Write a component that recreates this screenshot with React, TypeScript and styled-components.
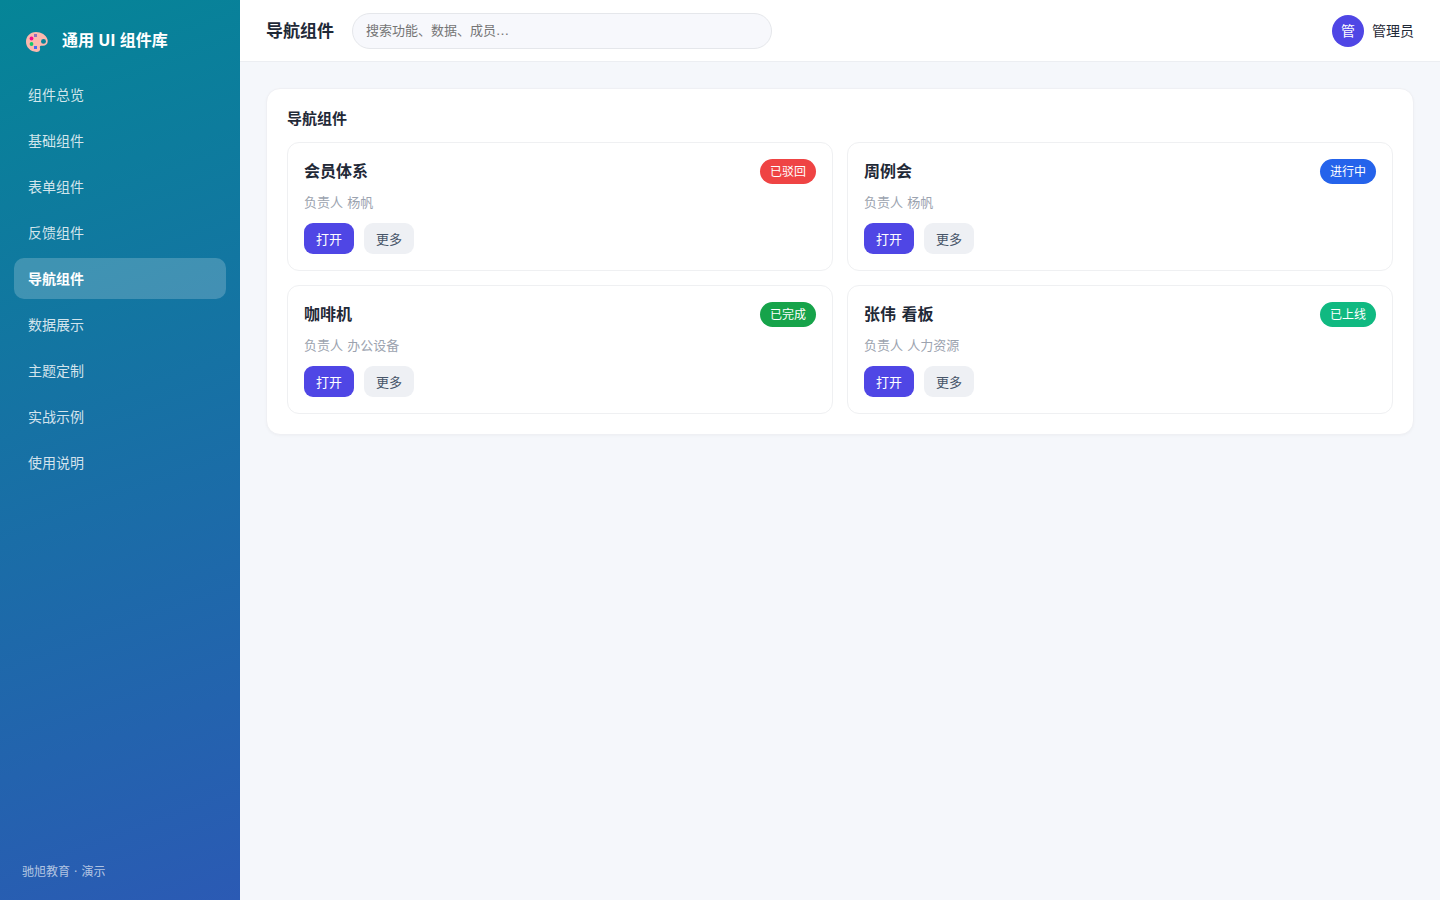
import React from "react";
import styled, { createGlobalStyle } from "styled-components";

const GlobalStyle = createGlobalStyle`
  *, *::before, *::after { box-sizing: border-box; }
  body {
    margin: 0;
    background: #f5f7fb;
    color: #1f2937;
    font-family: "DejaVu Sans", "Noto Sans CJK SC", sans-serif;
    font-size: 14px;
  }
  button, input { font-family: inherit; }
`;

const Shell = styled.div`
  display: flex;
  min-height: 100vh;
`;

const Sidebar = styled.aside`
  flex: 0 0 240px;
  display: flex;
  flex-direction: column;
  padding: 22px 14px 18px;
  background: linear-gradient(160deg, #058597, #2b5ab4);
  color: #fff;
`;

const Brand = styled.div`
  display: flex;
  align-items: center;
  gap: 14px;
  height: 36px;
  margin-bottom: 16px;
  padding-left: 12px;
  font-family: "Open Sans", "Noto Sans CJK SC", sans-serif;
  font-size: 16px;
  font-weight: 700;
  line-height: 24px;

  svg { margin-top: 4px; }
`;

const Nav = styled.nav`
  display: flex;
  flex-direction: column;
  gap: 5px;
`;

const NavLink = styled.a<{ $active?: boolean }>`
  padding: 1px 14px 0;
  border-radius: 10px;
  background: ${(p) => (p.$active ? "rgba(255, 255, 255, 0.2)" : "transparent")};
  color: ${(p) => (p.$active ? "#fff" : "rgba(255, 255, 255, 0.82)")};
  font-size: 14px;
  font-weight: ${(p) => (p.$active ? 700 : 400)};
  line-height: 40px;
  text-decoration: none;
`;

const SidebarFooter = styled.div`
  margin-top: auto;
  padding-left: 8px;
  color: rgba(255, 255, 255, 0.65);
  font-size: 12px;
  line-height: 20px;
`;

const Main = styled.div`
  flex: 1;
  min-width: 0;
`;

const Topbar = styled.header`
  display: flex;
  align-items: center;
  gap: 18px;
  height: 62px;
  padding: 0 26px;
  border-bottom: 1px solid #eceef2;
  background: #fff;
`;

const PageTitle = styled.h1`
  margin: 0;
  font-size: 17px;
  line-height: 24px;
`;

const SearchInput = styled.input`
  flex: 0 1 420px;
  min-width: 0;
  height: 36px;
  padding: 0 13px;
  border: 1px solid #e5e7eb;
  border-radius: 18px;
  background: #f7f8fc;
  color: #1f2937;
  font-size: 13px;

  &::placeholder { color: #757575; opacity: 1; }
`;

const User = styled.div`
  display: flex;
  align-items: center;
  gap: 8px;
  margin-left: auto;
  line-height: 20px;
`;

const Avatar = styled.span`
  width: 32px;
  height: 32px;
  border-radius: 50%;
  background: #4f46e5;
  color: #fff;
  line-height: 32px;
  text-align: center;
`;

const Content = styled.main`
  padding: 26px;
`;

const Panel = styled.section`
  padding: 20px;
  border: 1px solid #eff0f4;
  border-radius: 14px;
  background: #fff;
  box-shadow: 0 1px 3px rgba(16, 24, 40, 0.03);
`;

const PanelTitle = styled.h2`
  margin: 0 0 13px;
  font-size: 15px;
  line-height: 20px;
`;

const CardGrid = styled.div`
  display: grid;
  grid-template-columns: repeat(2, minmax(0, 1fr));
  gap: 14px;
`;

const Card = styled.article`
  padding: 16px;
  border: 1px solid #eff0f2;
  border-radius: 12px;
`;

const CardHead = styled.div`
  display: flex;
  align-items: center;
  justify-content: space-between;
`;

const CardTitle = styled.h3`
  margin: 0;
  padding-top: 1px;
  font-size: 16px;
  line-height: 24px;
`;

const Badge = styled.span<{ $color: string }>`
  padding: 1px 10px 0;
  border-radius: 13px;
  background: ${(p) => p.$color};
  color: #fff;
  font-size: 12px;
  line-height: 24px;
`;

const Owner = styled.p`
  margin: 8px 0 10px;
  color: #9ca3af;
  font-size: 13px;
  line-height: 21px;
`;

const Actions = styled.div`
  display: flex;
  gap: 10px;
`;

const Button = styled.button<{ $primary?: boolean }>`
  height: 31px;
  padding: 0 12px;
  border: 0;
  border-radius: 9px;
  background: ${(p) => (p.$primary ? "#4f46e5" : "#eef0f4")};
  color: ${(p) => (p.$primary ? "#fff" : "#475569")};
  font-size: 13px;
  cursor: pointer;
`;

const PaletteIcon = () => (
  <svg width="22" height="20" viewBox="0 0 22 20" aria-hidden="true">
    <path
      fill="#fcb8ae"
      fillRule="evenodd"
      d="M10 0C15 0 20.500 3 21.500 7.500C22.500 11.500 20 14 16.500 13.800C14 13.700 13.500 14.500 14 16C14.600 18.500 13 20 10.500 20C4 19.500 0 15 0 9.800C0 4.500 4 0 10 0ZM17.500 7A2.500 2.400 0 1 0 17.500 11.800A2.500 2.400 0 1 0 17.500 7Z"
    />
    <rect x="8" y="2" width="3" height="3" fill="#9070bf" />
    <circle cx="5.500" cy="6.500" r="1.900" fill="#f5098e" />
    <circle cx="5.500" cy="12" r="1.900" fill="#16c76c" />
    <rect x="8" y="14" width="3" height="3" fill="#4468f5" />
  </svg>
);

const navItems = [
  "组件总览",
  "基础组件",
  "表单组件",
  "反馈组件",
  "导航组件",
  "数据展示",
  "主题定制",
  "实战示例",
  "使用说明",
];

const cards = [
  { title: "会员体系", owner: "杨帆", status: "已驳回", color: "#ef4444" },
  { title: "周例会", owner: "杨帆", status: "进行中", color: "#2563eb" },
  { title: "咖啡机", owner: "办公设备", status: "已完成", color: "#16a34a" },
  { title: "张伟 看板", owner: "人力资源", status: "已上线", color: "#10b981" },
];

export default function App() {
  const current = "导航组件";
  return (
    <>
      <GlobalStyle />
      <Shell lang="zh-CN">
        <Sidebar>
          <Brand>
            <PaletteIcon />
            <span>通用 UI 组件库</span>
          </Brand>
          <Nav>
            {navItems.map((item) => (
              <NavLink
                key={item}
                href="#"
                $active={item === current}
                aria-current={item === current ? "page" : undefined}
              >
                {item}
              </NavLink>
            ))}
          </Nav>
          <SidebarFooter>驰旭教育 · 演示</SidebarFooter>
        </Sidebar>
        <Main>
          <Topbar>
            <PageTitle>{current}</PageTitle>
            <SearchInput
              type="search"
              aria-label="搜索"
              placeholder="搜索功能、数据、成员…"
            />
            <User>
              <Avatar>管</Avatar>
              <span>管理员</span>
            </User>
          </Topbar>
          <Content>
            <Panel>
              <PanelTitle>{current}</PanelTitle>
              <CardGrid>
                {cards.map((card) => (
                  <Card key={card.title}>
                    <CardHead>
                      <CardTitle>{card.title}</CardTitle>
                      <Badge $color={card.color}>{card.status}</Badge>
                    </CardHead>
                    <Owner>负责人 {card.owner}</Owner>
                    <Actions>
                      <Button type="button" $primary>
                        打开
                      </Button>
                      <Button type="button">更多</Button>
                    </Actions>
                  </Card>
                ))}
              </CardGrid>
            </Panel>
          </Content>
        </Main>
      </Shell>
    </>
  );
}
